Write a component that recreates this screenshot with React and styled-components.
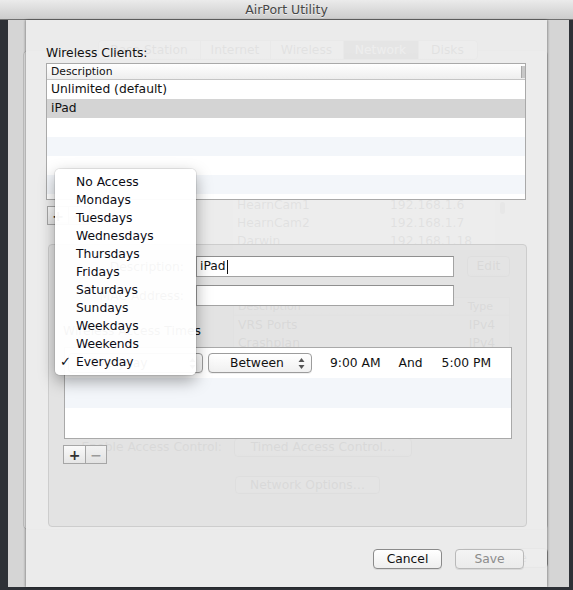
import React from 'react';
import styled, { createGlobalStyle } from 'styled-components';

const GlobalStyle = createGlobalStyle`
  html, body {
    margin: 0;
    padding: 0;
    background: #2e3137;
  }
  body {
    font-family: "DejaVu Sans", "Liberation Sans", sans-serif;
    -webkit-font-smoothing: antialiased;
  }
`;

const Screen = styled.div`
  position: relative;
  width: 573px;
  height: 590px;
  overflow: hidden;
  background: #2e3137;
  display: flex;
  flex-direction: column;
`;

const TitleBar = styled.header`
  height: 19px;
  flex: none;
  border-bottom: 1px solid #707070;
  background: linear-gradient(#ebebeb, #cccccc);
  display: flex;
  align-items: center;
  justify-content: center;
  font-size: 12.5px;
  color: #474747;
  text-shadow: 0 1px 0 rgba(255, 255, 255, 0.6);
`;

const Stage = styled.div`
  position: relative;
  height: 567px;
  display: flex;
`;

/* ---------- the settings panel behind the sheet ---------- */

const BackPanel = styled.div`
  margin-left: 8px;
  width: 561px;
  box-sizing: border-box;
  padding: 20px 21px 0 15px;
  background: #d5d5d5;
  display: flex;
  flex-direction: column;
`;

const TabBar = styled.div`
  position: relative;
  z-index: 1;
  align-self: center;
  margin-left: 4px;
  height: 20px;
  box-sizing: border-box;
  display: flex;
  border: 1px solid #a8a8a8;
  border-radius: 4px;
  overflow: hidden;
  background: linear-gradient(#ffffff, #ededed);
`;

const Tab = styled.div`
  width: ${p => p.$w}px;
  box-sizing: border-box;
  border-left: ${p => (p.$first ? 'none' : '1px solid #b4b4b4')};
  font-size: 12.3px;
  line-height: 18px;
  text-align: center;
  color: ${p => (p.$active ? '#fff' : '#222')};
  background: ${p => (p.$active ? 'linear-gradient(#6a6a6a, #555)' : 'transparent')};
`;

const BackBox = styled.div`
  margin-top: -10px;
  height: 480px;
  box-sizing: border-box;
  border: 1px solid #bcbcbc;
  border-radius: 5px;
  background: #e4e4e4;
  display: grid;
  grid-template-columns: 209px 277px;
  align-content: start;
  padding-top: 145px;
`;

const BackList = styled.div`
  grid-column: 2;
  height: 54px;
  display: flex;
`;

const BackListRows = styled.div`
  width: 262px;
  background: #fafafa;
`;

const BackListRow = styled.div`
  height: 18px;
  display: flex;
  font-size: 12.3px;
  line-height: 18px;
  color: #111;
  padding-left: 4px;
  & > span:first-child {
    width: 153px;
  }
`;

const ScrollThumb = styled.div`
  margin: 6px 0 0 5px;
  width: 5px;
  height: 12px;
  border-radius: 3px;
  background: #888;
`;

const BackButton = styled.div`
  grid-column: ${p => p.$col || 2};
  justify-self: ${p => p.$justify || 'start'};
  margin-top: ${p => p.$mt || 0}px;
  margin-left: ${p => p.$ml || 0}px;
  width: ${p => p.$w}px;
  height: ${p => p.$h || 19}px;
  box-sizing: border-box;
  border: 1px solid #8d8d8d;
  border-radius: 4px;
  background: linear-gradient(#ffffff, #ececec);
  font-size: 12.3px;
  line-height: ${p => (p.$h || 19) - 2}px;
  text-align: center;
  color: #111;
`;

const BackTable = styled.div`
  grid-column: 2;
  margin-top: 20px;
  height: 55px;
  background: #fff;
  border: 1px solid #c4c4c4;
  box-sizing: border-box;
`;

const BackTableHead = styled.div`
  height: 17px;
  display: flex;
  justify-content: space-between;
  padding: 0 16px 0 4px;
  font-size: 11px;
  line-height: 17px;
  color: #222;
  background: linear-gradient(#fff, #ececec);
  border-bottom: 1px solid #cfcfcf;
`;

const BackTableRow = styled.div`
  height: 18px;
  display: flex;
  justify-content: space-between;
  padding: 0 14px 0 4px;
  font-size: 12.3px;
  line-height: 18px;
  color: #111;
`;

const BackLabel = styled.div`
  grid-column: 1;
  justify-self: end;
  margin-top: 86px;
  padding-right: 11px;
  font-size: 12.3px;
  line-height: 19px;
  color: #111;
`;

const BackFooter = styled.div`
  margin-top: 18px;
  display: flex;
  justify-content: flex-end;
`;

/* ---------- the Wireless Clients sheet ---------- */

const Sheet = styled.section`
  position: absolute;
  z-index: 2;
  left: 26px;
  top: 0;
  width: 521px;
  height: 567px;
  box-sizing: border-box;
  padding: 25px 21px 0 20px;
  background: rgba(236, 236, 236, 0.95);
  box-shadow: -1px 0 2px rgba(0, 0, 0, 0.28), 1px 0 2px rgba(0, 0, 0, 0.28);
  display: flex;
  flex-direction: column;
`;

const Label = styled.div`
  font-size: 12.3px;
  line-height: 16px;
  color: #111;
  margin-left: ${p => p.$indent || 0}px;
  margin-top: ${p => p.$mt || 0}px;
`;

const ClientsTable = styled.div`
  margin-top: 2px;
  height: 137px;
  box-sizing: border-box;
  border: 1px solid #a9a9a9;
  background: #fff;
`;

const HeaderRow = styled.div`
  height: 15px;
  display: flex;
  justify-content: space-between;
  align-items: center;
  padding-left: 4px;
  border-bottom: 1px solid #c5c5c5;
  background: linear-gradient(#ffffff, #eeeeee);
  font-size: 10.8px;
  color: #111;
`;

const HeaderGrip = styled.div`
  width: 3px;
  height: 12px;
  background: #c8c8c8;
  border-left: 1px solid #a8a8a8;
`;

const ClientRow = styled.div`
  height: 19px;
  padding-left: 4px;
  font-size: 12.3px;
  line-height: 19px;
  color: #111;
  background: ${p => (p.$selected ? '#d4d4d4' : p.$alt ? '#f3f6fa' : '#fff')};
`;

const PlusMinus = styled.div`
  display: flex;
  margin-top: ${p => p.$mt}px;
  margin-left: ${p => p.$ml || 0}px;
`;

const PMButton = styled.div`
  width: ${p => p.$w}px;
  height: 19px;
  box-sizing: border-box;
  border: 1px solid #a6a6a6;
  border-left-width: ${p => (p.$first ? 1 : 0)}px;
  background: ${p => (p.$first ? 'linear-gradient(#fafafa, #e6e6e6)' : 'linear-gradient(#f2f2f2, #e2e2e2)')};
  display: flex;
  align-items: center;
  justify-content: center;
  font-size: 14px;
  font-weight: bold;
  color: ${p => (p.$dim ? '#9a9a9a' : '#333')};
`;

const GroupBox = styled.div`
  margin: 19px 0 0 2px;
  width: 479px;
  height: 283px;
  box-sizing: border-box;
  border: 1px solid #cdcdcd;
  border-radius: 4px;
  background: rgba(0, 0, 0, 0.035);
  padding: 11px 0 0 14px;
  display: flex;
  flex-direction: column;
`;

const FieldRow = styled.div`
  display: grid;
  grid-template-columns: 121px 258px;
  column-gap: 12px;
  align-items: center;
  margin-top: ${p => p.$mt || 0}px;
`;

const FieldLabel = styled.div`
  justify-self: end;
  font-size: 12.3px;
  color: #111;
`;

const TextField = styled.div`
  height: 21px;
  box-sizing: border-box;
  border: 1px solid #a3a3a3;
  border-top-color: #8e8e8e;
  background: #fff;
  padding-left: 3px;
  font-size: 12.3px;
  line-height: 19px;
  color: #111;
  display: flex;
  align-items: center;
`;

const Caret = styled.span`
  width: 1px;
  height: 14px;
  margin-left: 1px;
  background: #111;
`;

const TimesTable = styled.div`
  margin: 8px 0 0 1px;
  width: 448px;
  height: 92px;
  box-sizing: border-box;
  border: 1px solid #a9a9a9;
  background: #fff;
`;

const TimeRow = styled.div`
  height: 30px;
  background: ${p => (p.$alt ? '#f3f6fa' : '#fff')};
  display: flex;
  align-items: center;
  padding-left: 3px;
  font-size: 12.3px;
  color: #111;
`;

const PopUp = styled.div`
  width: ${p => p.$w}px;
  height: 20px;
  margin-right: ${p => p.$mr || 0}px;
  box-sizing: border-box;
  border: 1px solid #9c9c9c;
  border-radius: 4px;
  background: linear-gradient(#ffffff, #f0f0f0);
  box-shadow: 0 1px 0 rgba(0, 0, 0, 0.06);
  display: flex;
  align-items: center;
  padding: 0 6px 0 21px;
  justify-content: space-between;
  font-size: 12.3px;
`;

const TimeText = styled.span`
  margin-right: ${p => p.$mr}px;
`;

const Footer = styled.div`
  margin: 22px 2px 0 0;
  display: flex;
  justify-content: flex-end;
  gap: 13px;
`;

const PushButton = styled.div`
  width: 69px;
  height: 20px;
  box-sizing: border-box;
  border: 1px solid ${p => (p.$disabled ? '#b9b9b9' : '#8a8a8a')};
  border-radius: 4px;
  background: ${p => (p.$disabled ? 'linear-gradient(#f4f4f4, #ebebeb)' : 'linear-gradient(#ffffff, #eeeeee)')};
  box-shadow: 0 1px 0 rgba(0, 0, 0, 0.08);
  font-size: 12.3px;
  line-height: 18px;
  text-align: center;
  color: ${p => (p.$disabled ? '#8c8c8c' : '#111')};
`;

/* ---------- the open pop-up menu ---------- */

const Menu = styled.ul`
  position: absolute;
  left: 29px;
  top: 149px;
  width: 141px;
  margin: 0;
  padding: 4px 0;
  list-style: none;
  box-sizing: border-box;
  border-radius: 5px;
  background: rgba(255, 255, 255, 0.96);
  box-shadow: 0 0 0 1px rgba(0, 0, 0, 0.08), 0 6px 16px rgba(0, 0, 0, 0.35);
`;

const MenuItem = styled.li`
  position: relative;
  height: 18px;
  padding-left: 21px;
  font-size: 12.3px;
  line-height: 18px;
  color: #0b0b14;
`;

const Check = styled.span`
  position: absolute;
  left: 5px;
  top: 0;
  font-size: 13px;
  font-weight: bold;
`;

const Arrows = () => (
  <svg width="7" height="13" viewBox="0 0 7 13">
    <path d="M3.5 1 L6.5 5 L0.5 5 Z" fill="#555" />
    <path d="M3.5 12 L6.5 8 L0.5 8 Z" fill="#555" />
  </svg>
);

const tabs = [
  { name: 'Base Station', w: 101 },
  { name: 'Internet', w: 70 },
  { name: 'Wireless', w: 73 },
  { name: 'Network', w: 75, active: true },
  { name: 'Disks', w: 59 },
];

const backClients = [
  ['HearnCam1', '192.168.1.6'],
  ['HearnCam2', '192.168.1.7'],
  ['Darwin', '192.168.1.18'],
];

const clients = ['Unlimited (default)', 'iPad', '', '', '', ''];

const days = [
  'No Access', 'Mondays', 'Tuesdays', 'Wednesdays', 'Thursdays', 'Fridays',
  'Saturdays', 'Sundays', 'Weekdays', 'Weekends', 'Everyday',
];

export default function App() {
  return (
    <Screen>
      <GlobalStyle />
      <TitleBar>AirPort Utility</TitleBar>
      <Stage>
        <BackPanel>
          <TabBar>
            {tabs.map((t, i) => (
              <Tab key={t.name} $w={t.w} $first={i === 0} $active={t.active}>{t.name}</Tab>
            ))}
          </TabBar>
          <BackBox>
            <BackList>
              <BackListRows>
                {backClients.map(([n, ip]) => (
                  <BackListRow key={n}><span>{n}</span><span>{ip}</span></BackListRow>
                ))}
              </BackListRows>
              <ScrollThumb />
            </BackList>
            <BackButton $justify="end" $mt={6} $w={43} $h={21}>Edit</BackButton>
            <BackTable>
              <BackTableHead><span>Description</span><span>Type</span></BackTableHead>
              <BackTableRow><span>VRS Ports</span><span>IPv4</span></BackTableRow>
              <BackTableRow><span>Crashplan</span><span>IPv4</span></BackTableRow>
            </BackTable>
            <BackLabel>Enable Access Control:</BackLabel>
            <BackButton $mt={86} $ml={1} $w={178}>Timed Access Control…</BackButton>
            <BackButton $mt={19} $ml={2} $w={145} $h={18}>Network Options…</BackButton>
          </BackBox>
          <BackFooter>
            <BackButton $w={87} $h={20}>Update</BackButton>
          </BackFooter>
        </BackPanel>

        <Sheet>
          <Label>Wireless Clients:</Label>
          <ClientsTable>
            <HeaderRow>
              <span>Description</span>
              <HeaderGrip />
            </HeaderRow>
            {clients.map((c, i) => (
              <ClientRow key={i} $selected={i === 1} $alt={i % 2 === 1}>{c}</ClientRow>
            ))}
          </ClientsTable>
          <PlusMinus $mt={6} $ml={1}>
            <PMButton $first $w={22}>+</PMButton>
            <PMButton $w={21} $dim>−</PMButton>
          </PlusMinus>

          <GroupBox>
            <FieldRow>
              <FieldLabel>Description:</FieldLabel>
              <TextField>iPad<Caret /></TextField>
            </FieldRow>
            <FieldRow $mt={8}>
              <FieldLabel>MAC Address:</FieldLabel>
              <TextField />
            </FieldRow>
            <Label $mt={17}>Wireless Access Times</Label>
            <TimesTable>
              <TimeRow>
                <PopUp $w={135} $mr={5}>Everyday<Arrows /></PopUp>
                <PopUp $w={104} $mr={18}>Between<Arrows /></PopUp>
                <TimeText $mr={18}>9:00 AM</TimeText>
                <TimeText $mr={19}>And</TimeText>
                <TimeText $mr={0}>5:00 PM</TimeText>
              </TimeRow>
              <TimeRow $alt />
              <TimeRow />
            </TimesTable>
            <PlusMinus $mt={6}>
              <PMButton $first $w={23}>+</PMButton>
              <PMButton $w={21} $dim>−</PMButton>
            </PlusMinus>
          </GroupBox>

          <Footer>
            <PushButton>Cancel</PushButton>
            <PushButton $disabled>Save</PushButton>
          </Footer>

          <Menu>
            {days.map(d => (
              <MenuItem key={d}>
                {d === 'Everyday' && <Check>✓</Check>}
                {d}
              </MenuItem>
            ))}
          </Menu>
        </Sheet>
      </Stage>
    </Screen>
  );
}
